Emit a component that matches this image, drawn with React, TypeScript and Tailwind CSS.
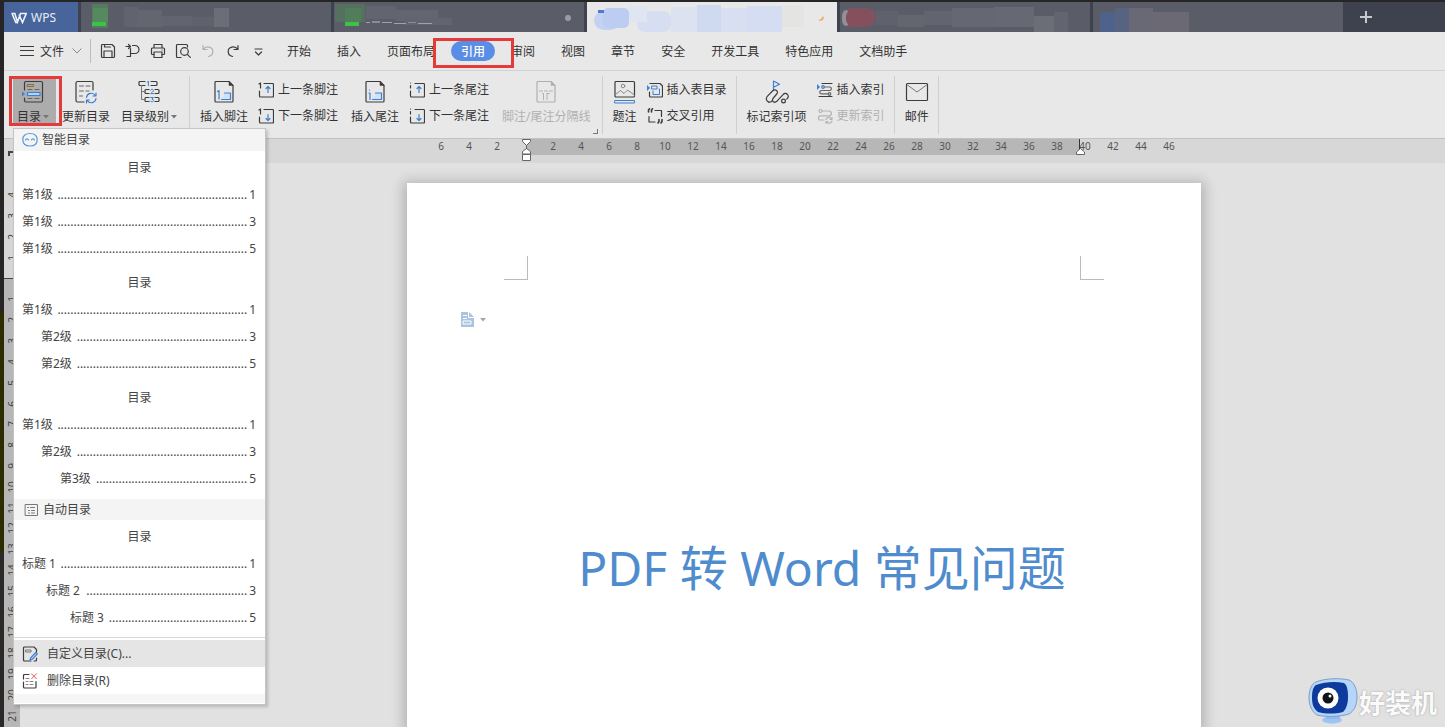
import React from 'react';

type Block = [x: number, y: number, w: number, h: number, fill: string, r?: number];

interface DocTab {
  id: string;
  active?: boolean;
  blocks: Block[];
  dot?: 'saved' | 'dirty';
}

interface TocRow {
  label: string;
  page: number;
  indent: string;
  dots: number;
}

const docTabs: DocTab[] = [
  {
    id: 'doc-1',
    blocks: [
      [11, 2, 16, 24, '#547a63'],
      [12, 6, 15, 14, '#558a5e'],
      [11, 20, 14, 4, '#3cc149'],
      [43, 5, 14, 20, '#61636e'],
      [57, 8, 24, 17, '#64666f'],
      [81, 14, 30, 10, '#626470'],
      [111, 15, 22, 9, '#5f616d'],
      [133, 6, 15, 19, '#6b6d77'],
    ],
  },
  {
    id: 'doc-2',
    dot: 'saved',
    blocks: [
      [1, 2, 30, 18, '#55705f'],
      [11, 6, 16, 14, '#527d5b'],
      [11, 20, 14, 4, '#3cc149'],
      [32, 4, 30, 13, '#62646f'],
      [62, 8, 42, 11, '#64666f'],
      [70, 16, 48, 7, '#62646f'],
      [32, 20, 4, 1, '#a0a2aa'],
      [38, 19, 8, 2, '#8b8d96'],
      [48, 20, 10, 1, '#a0a2aa'],
      [60, 21, 12, 1, '#a0a2aa'],
      [74, 20, 8, 1, '#8b8d96'],
      [84, 21, 14, 1, '#a0a2aa'],
    ],
  },
  {
    id: 'doc-3',
    active: true,
    dot: 'dirty',
    blocks: [
      [50, 9, 34, 21, '#d6def2', 8],
      [7, 9, 26, 19, '#c3d2f2', 10],
      [16, 6, 26, 20, '#bccdf1', 5],
      [11, 8, 6, 3, '#4a7dd0'],
      [42, 4, 18, 16, '#dfe5f1'],
      [84, 5, 26, 25, '#dce2f0'],
      [110, 3, 24, 27, '#cfd9ef'],
      [134, 6, 26, 24, '#d8dff0'],
      [160, 4, 35, 26, '#d4ddf2'],
      [195, 3, 22, 22, '#e4e4e3'],
    ],
  },
  {
    id: 'doc-4',
    blocks: [
      [2, 6, 34, 19, '#7d5460', 10],
      [2, 8, 8, 16, '#8f9099', 6],
      [6, 7, 26, 18, '#85505b', 8],
      [36, 9, 22, 14, '#5f616c'],
      [58, 13, 26, 12, '#64666f'],
      [84, 9, 30, 14, '#62646f'],
      [112, 6, 42, 19, '#656772'],
      [154, 5, 40, 20, '#666873'],
      [194, 14, 20, 16, '#6b6d77'],
      [214, 10, 14, 20, '#62646f'],
    ],
  },
  {
    id: 'doc-5',
    blocks: [
      [7, 10, 15, 20, '#4e628c', 3],
      [22, 6, 14, 24, '#566482'],
      [36, 6, 24, 24, '#686974'],
      [60, 10, 36, 20, '#6b6974'],
    ],
  },
];

const menuBefore = ['开始', '插入', '页面布局'];
const menuAfter = ['审阅', '视图', '章节', '安全', '开发工具', '特色应用', '文档助手'];

const smartTocs: TocRow[][] = [
  [
    { label: '第1级', page: 1, indent: 'pl-2', dots: 59 },
    { label: '第1级', page: 3, indent: 'pl-2', dots: 59 },
    { label: '第1级', page: 5, indent: 'pl-2', dots: 59 },
  ],
  [
    { label: '第1级', page: 1, indent: 'pl-2', dots: 59 },
    { label: '第2级', page: 3, indent: 'pl-[27px]', dots: 53 },
    { label: '第2级', page: 5, indent: 'pl-[27px]', dots: 53 },
  ],
  [
    { label: '第1级', page: 1, indent: 'pl-2', dots: 59 },
    { label: '第2级', page: 3, indent: 'pl-[27px]', dots: 53 },
    { label: '第3级', page: 5, indent: 'pl-[46px]', dots: 47 },
  ],
];

const autoToc: TocRow[] = [
  { label: '标题 1', page: 1, indent: 'pl-2', dots: 58 },
  { label: '标题 2', page: 3, indent: 'pl-8', dots: 50 },
  { label: '标题 3', page: 5, indent: 'pl-14', dots: 43 },
];

const rulerX = ['6', '4', '2', '', ...Array.from({ length: 23 }, (_, i) => String((i + 1) * 2))];
const rulerY = ['4', '3', '2', '1', '', ...Array.from({ length: 21 }, (_, i) => String(i + 1))];

interface IconProps {
  size?: number;
  color?: string;
  children: React.ReactNode;
}

const Icon: React.FC<IconProps> = ({ size = 16, color = '#3c3c3c', children }) => (
  <svg
    width={size}
    height={size}
    viewBox={`0 0 ${size} ${size}`}
    fill="none"
    stroke={color}
    strokeWidth="1.2"
    strokeLinecap="round"
    strokeLinejoin="round"
    className="shrink-0"
    aria-hidden="true"
  >
    {children}
  </svg>
);

const BLUE = '#3f7fd0';

const Caret: React.FC<{ color?: string }> = ({ color = '#777' }) => (
  <svg width="6" height="4" viewBox="0 0 6 4" className="shrink-0" aria-hidden="true">
    <path d="M0 0h6L3 3.4z" fill={color} />
  </svg>
);

const TocIcon = () => (
  <Icon size={24}>
    <path d="M3.500 10V3A1.500 1.500 0 0 1 5 1.500h15A1.500 1.500 0 0 1 21.500 3v17.500A1.500 1.500 0 0 1 20 22H5a1.500 1.500 0 0 1-1.500-1.500V18" />
    <rect x="6.500" y="4.500" width="6" height="2" stroke="#8a6a45" strokeWidth="1" />
    <path d="M7 9.500h4M14 9.500h4M7 18.500h4M14 18.500h4" stroke="#666" strokeWidth="1" />
    <rect x="6.500" y="12.500" width="12.500" height="3" stroke={BLUE} fill="#b9d3f3" />
    <path d="M1 11.500v5l3-2.500z" fill={BLUE} stroke="none" />
  </Icon>
);

const RefreshTocIcon = () => (
  <Icon size={24}>
    <path d="M10 22H3.500a1.500 1.500 0 0 1-1.500-1.500V3a1.500 1.500 0 0 1 1.500-1.500h14A1.500 1.500 0 0 1 19 3v7" />
    <path d="M5.500 6h4M12 6h4M5.500 11h4M12 11h3M5.500 16h3" stroke="#666" strokeWidth="1" />
    <path
      d="M12.500 17.500a4.800 4.800 0 0 1 8.800-2M22 13v3h-3M22 18.500a4.800 4.800 0 0 1-8.800 2M12.500 23v-3h3"
      stroke={BLUE}
    />
  </Icon>
);

const LevelIcon = () => (
  <Icon size={24}>
    <path d="M8 1.500H3a1 1 0 0 0-1 1v2a1 1 0 0 0 1 1h5M14 1.500h5a1 1 0 0 1 1 1v2a1 1 0 0 1-1 1h-5" />
    <path d="M12 9.500H9a1 1 0 0 0-1 1v2a1 1 0 0 0 1 1h3M18 9.500h3a1 1 0 0 1 1 1v2a1 1 0 0 1-1 1h-3" />
    <path d="M12 17.500H9a1 1 0 0 0-1 1v2a1 1 0 0 0 1 1h3M18 17.500h3a1 1 0 0 1 1 1v2a1 1 0 0 1-1 1h-3" />
    <path d="M4.500 5.500v14H8M4.500 11.500H8" stroke="#777" strokeWidth="1" />
    <path
      d="M10.200 2.200l1.200-.9v4.400M13.600 10.200c.6-1.400 2.900-1.100 2.800.4 0 1-1.500 1.900-2.800 3h3M13.600 17.500h2.800l-1.500 1.700c2.200-.1 2.200 2.600 0 2.600-.7 0-1.200-.2-1.500-.7"
      stroke={BLUE}
      strokeWidth="1"
    />
  </Icon>
);

const NoteIcon: React.FC<{ kind: 'foot' | 'end' | 'line' }> = ({ kind }) => (
  <Icon size={24} color={kind === 'line' ? '#b0b0b0' : '#3c3c3c'}>
    <path d="M4 1.500h13l4 4V21a1 1 0 0 1-1 1H4a1 1 0 0 1-1-1V2.500a1 1 0 0 1 1-1z" />
    <path d="M17 1.500V5.500h4z" fill={kind === 'line' ? '#b0b0b0' : '#3c3c3c'} strokeWidth=".5" />
    {kind === 'line' ? (
      <path d="M5.500 11h3M10.500 11h3M15.500 11h3M8.500 13.500h1v6M13 14v5.500M13 13.500h2.500" strokeWidth="1" />
    ) : (
      <>
        <path d="M12 13h7v6.500H9.500V17H12z" fill="#cfe2f8" stroke="none" />
        <path d="M12.500 13H18.500v6.500H9.500" stroke={BLUE} />
        <path d={kind === 'foot' ? 'M5.500 11.500L7 10.500V19' : 'M6.500 10h.1M6 13h1v6.500'} stroke={BLUE} />
      </>
    )}
  </Icon>
);

const StepIcon: React.FC<{ kind: 'foot' | 'end'; dir: 'up' | 'down' }> = ({ kind, dir }) => (
  <Icon>
    <path d={kind === 'foot' ? 'M1 2l1.500-1v5' : 'M1.500 1h.1M1.500 3.500V6'} />
    <path d="M6 1.500h8.500a1 1 0 0 1 1 1V14a1 1 0 0 1-1 1h-12a1 1 0 0 1-1-1V9" />
    <path
      d={dir === 'up' ? 'M10 10.500V4.500M8 6.500l2-2 2 2' : 'M10 6.500v6M8 10.500l2 2 2-2'}
      stroke={BLUE}
    />
  </Icon>
);

const CaptionIcon = () => (
  <Icon size={24}>
    <rect x="2" y="1.500" width="19.500" height="15.500" rx="1" />
    <path d="M2.500 14.500l5-4 3.500 3 3.500-3.500 7 5" stroke="#888" strokeWidth="1" />
    <circle cx="10" cy="6" r="1.800" stroke="#888" strokeWidth="1" />
    <rect x="2" y="20.500" width="19.500" height="2.500" stroke={BLUE} strokeWidth="1" />
  </Icon>
);

const TableTocIcon = () => (
  <Icon>
    <path d="M3 1.500h10l2.500 2.500v10a1 1 0 0 1-1 1H3.500a1 1 0 0 1-1-1V10" />
    <path d="M0 3v6l3-3z" fill={BLUE} stroke="none" />
    <path d="M5 4h5v3H5z" stroke={BLUE} strokeWidth="1" />
    <path d="M6 9v3.500h6.500V7H12" stroke={BLUE} strokeWidth="1" />
  </Icon>
);

const CrossRefIcon = () => (
  <Icon>
    <path d="M8 2.500h6.500v6M2 8.500v5.500h6" />
    <path d="M2.500.800L1.500 2v2M5.500.800L4.500 2v2" strokeWidth="1.600" />
    <path d="M12 11.500v2l-1 1.500M15 11.500v2l-1 1.500" strokeWidth="1.600" />
  </Icon>
);

const MarkIndexIcon = () => (
  <Icon size={24}>
    <path d="M8.500 9.500V1l6 3.200-6 3" stroke={BLUE} />
    <path d="M3.500 22c-2.500-1.200-2.800-4-1-5.800l5-5.200c3-2.800 6.500.3 4.200 3L8 18.500c-1.800 2.800 1.500 5 3.800 2.800l6-6.500c1-1.200 3-2.300 4.700-.3 1.200 1.500.8 3.200-.7 4.500" />
    <path d="M3.500 22c1.500.5 3-.2 4-1.500" />
    <circle cx="18.500" cy="21" r="1.900" />
  </Icon>
);

const InsertIndexIcon = () => (
  <Icon>
    <path d="M5 1.500h10M2 14.500h13" />
    <path d="M0 2v6l3-3z" fill={BLUE} stroke="none" />
    <path d="M7 5h6a1.800 1.800 0 0 1 0 3.500H4.500a1.700 1.700 0 0 0 0 3.400h6.500" stroke="#666" />
    <circle cx="6" cy="5" r="1.300" stroke={BLUE} />
    <circle cx="12.500" cy="12" r="1.300" stroke="#666" />
  </Icon>
);

const UpdateIndexIcon = () => (
  <Icon color="#b4b4b4">
    <path d="M5 3h7a2.300 2.300 0 0 1 0 4.800H3.500a2 2 0 0 0 0 4.200H7" />
    <circle cx="3.500" cy="3" r="1.500" />
    <path d="M9 11.500a3 3 0 0 1 5.500-.5M15 9.500v2h-2M15 13a3 3 0 0 1-5.500.8M9 15.500v-2h2" />
  </Icon>
);

const MailIcon = () => (
  <Icon size={24}>
    <rect x="1.500" y="3.500" width="21" height="17" rx="1" />
    <path d="M2.500 5l9.500 7 9.500-7" stroke="#777" strokeWidth="1" />
  </Icon>
);

interface ToolButtonProps {
  icon: React.ReactNode;
  label: string;
  caret?: boolean;
  disabled?: boolean;
}

const BigButton: React.FC<ToolButtonProps> = ({ icon, label, caret, disabled }) => (
  <button
    type="button"
    disabled={disabled}
    className="flex shrink-0 flex-col items-center gap-[5px] whitespace-nowrap disabled:text-[#b0b0b0]"
  >
    {icon}
    <span className="flex items-center gap-[2px] leading-4">
      {label}
      {caret && <Caret />}
    </span>
  </button>
);

const SmallButton: React.FC<ToolButtonProps> = ({ icon, label, disabled }) => (
  <button
    type="button"
    disabled={disabled}
    className="flex items-center gap-1 leading-4 whitespace-nowrap disabled:text-[#b0b0b0]"
  >
    {icon}
    {label}
  </button>
);

const Group: React.FC<{ launcher?: boolean; children: React.ReactNode }> = ({ launcher, children }) => (
  <div
    className={
      launcher
        ? 'relative flex shrink-0 gap-[10px] border-r border-[#cfcfcf] pt-1 pr-[11px] pl-[10px]'
        : 'flex shrink-0 gap-[10px] border-r border-[#cfcfcf] pt-1 pr-[9px] pl-[10px]'
    }
  >
    {children}
    {launcher && <span className="absolute right-1 bottom-0 size-[5px] border-r border-b border-[#777]" />}
  </div>
);

const TabStrip = () => (
  <div className="flex h-[30px] gap-[3px] overflow-hidden bg-[#3e414e]">
    <button
      type="button"
      className="flex w-[74px] shrink-0 items-center gap-1 bg-[#47659b] pt-px pl-[7px] text-xs text-[#e6ecf6]"
    >
      <svg width="16" height="12" viewBox="0 0 16 12" fill="none" stroke="#eef3fb" strokeWidth="1.6" aria-hidden="true">
        <path d="M.5 1.500h3.300L6.500 10l3-8.500h5.700L11.500 10.500 8 2.500M1 1.500l3.800 9h1.700" />
      </svg>
      WPS
    </button>
    {docTabs.map((tab) => (
      <button
        key={tab.id}
        type="button"
        aria-label={tab.id}
        className={tab.active ? 'w-[250px] shrink-0 bg-[#e8e8e8]' : 'w-[250px] shrink-0 bg-[#5a5c68]'}
      >
        <svg width="250" height="30" viewBox="0 0 250 30" aria-hidden="true">
          {tab.blocks.map(([x, y, w, h, fill, r = 0], i) => (
            <rect key={i} x={x} y={y} width={w} height={h} fill={fill} rx={r} />
          ))}
          {tab.dot === 'saved' && <circle cx="234" cy="16" r="3" fill="#9a9ba4" />}
          {tab.dot === 'dirty' && <path d="M231 18c2 0 4-1 5-4 2 3-1 6-5 4z" fill="#f0a050" />}
        </svg>
      </button>
    ))}
    <button type="button" aria-label="+" className="flex w-10 shrink-0 items-center justify-center">
      <svg width="12" height="12" viewBox="0 0 12 12" stroke="#c8c9cf" strokeWidth="2" aria-hidden="true">
        <path d="M6 0v12M0 6h12" />
      </svg>
    </button>
  </div>
);

const QuickAccess = () => (
  <div className="flex h-6 items-center gap-[9px] border-l border-[#bdbdbd] pl-[9px]">
    <Icon>
      <path d="M3 1.500h9L14.500 4v9.500a1 1 0 0 1-1 1h-11a1 1 0 0 1-1-1v-11a1 1 0 0 1 1-1z" />
      <path d="M4.500 1.500V4h6M4 14.500V8h8v6.500" />
    </Icon>
    <Icon>
      <path d="M1 3.500h4M3.500 1.500l2 2-2 2M2 13.500h3.500v-8M5.500 10.500H10a4 4 0 0 0 0-8H7.500" />
    </Icon>
    <Icon>
      <path d="M4 5V1.500h8V5M4 11.500H2.500a1 1 0 0 1-1-1V6a1 1 0 0 1 1-1h11a1 1 0 0 1 1 1v4.500a1 1 0 0 1-1 1H12" />
      <path d="M4 9h8v5.500H4zM12 7h.1" />
    </Icon>
    <Icon>
      <path d="M6 14.500H2.500a1 1 0 0 1-1-1v-11a1 1 0 0 1 1-1h9a1 1 0 0 1 1 1V4" />
      <circle cx="9.500" cy="8.500" r="3.800" />
      <path d="M12.300 11.300l3 3" />
    </Icon>
    <Icon color="#b0b0b0">
      <path d="M3 2.500v4h4M3.200 6.300C6 2.500 13 3.500 12.800 8.500c0 2.500-2 4.500-4.300 5" />
    </Icon>
    <Icon>
      <path d="M13 2.500v4H9M12.800 6.300C10 2.500 3 3.500 3.200 8.500c0 2.500 2 4.500 4.300 5" />
    </Icon>
    <Icon>
      <path d="M5 6h7M5.500 9l3 3 3-3" />
    </Icon>
  </div>
);

const MenuRow = () => (
  <div className="flex h-[39px] items-center overflow-hidden border-b border-[#d2d2d2] pl-4 whitespace-nowrap">
    <button type="button" className="flex items-center pr-2">
      <svg width="14" height="12" viewBox="0 0 14 12" stroke="#3c3c3c" aria-hidden="true">
        <path d="M0 1.500h14M0 5.500h14M0 10.500h14" />
      </svg>
      <span className="pt-[2px] pr-2 pl-[6px]">文件</span>
      <svg width="10" height="6" viewBox="0 0 10 6" fill="none" stroke="#888" aria-hidden="true">
        <path d="M.5.500L5 5 9.500.5" />
      </svg>
    </button>
    <QuickAccess />
    <nav className="flex pl-2">
      {menuBefore.map((item) => (
        <button key={item} type="button" className="mx-[3px] h-5 rounded-full px-[10px] pt-[2px]">
          {item}
        </button>
      ))}
      <button
        type="button"
        className="relative z-10 mx-[3px] h-5 rounded-full bg-[#5a8ee6] px-[10px] pt-[2px] font-medium text-white"
      >
        引用
        <span className="absolute -top-[3px] -right-[19px] -bottom-[7px] -left-[18px] border-3 border-[#e53a3a]" />
      </button>
      {menuAfter.map((item) => (
        <button key={item} type="button" className="mx-[3px] h-5 rounded-full px-[10px] pt-[2px]">
          {item}
        </button>
      ))}
    </nav>
  </div>
);

const TocBlock: React.FC<{ rows: TocRow[] }> = ({ rows }) => (
  <button type="button" className="block w-full text-left">
    <span className="block text-center leading-[27px]">目录</span>
    {rows.map((row, i) => (
      <span key={i} className={`flex gap-[2px] pr-[9px] leading-[27px] whitespace-nowrap ${row.indent}`}>
        <span>{row.label}</span>
        <span className="flex-1 text-right">{'.'.repeat(row.dots)}</span>
        <span>{row.page}</span>
      </span>
    ))}
  </button>
);

const TocMenu = () => (
  <div className="absolute top-[52px] left-0 z-20 w-[253px] border border-[#c4c4c4] bg-white pb-px text-[#444] shadow-[2px_2px_3px_rgba(0,0,0,0.18)]">
    <div className="flex h-[22px] items-center gap-1 bg-[#f4f4f4] pl-2">
      <Icon color="#5a9bd8">
        <path d="M8 1.500c4.500 0 7.200 2 7.200 6.200S12.500 14 8 14 .8 12 .8 7.700 3.500 1.500 8 1.500z" />
        <path d="M3.500 8c.5-1.500 2.500-1.500 3 0M9.500 8c.5-1.500 2.500-1.500 3 0" />
      </Icon>
      智能目录
    </div>
    <div className="flex flex-col gap-[7px] pt-[3px] pb-[7px]">
      {smartTocs.map((rows, i) => (
        <TocBlock key={i} rows={rows} />
      ))}
    </div>
    <div className="flex h-[21px] items-center gap-1 bg-[#f4f4f4] pl-[9px]">
      <Icon color="#777">
        <rect x="2.500" y="2.500" width="12" height="11" strokeWidth="1" />
        <path d="M4.500 5.500h1M7.500 5.500h4M5.500 8.500h1M8.500 8.500h3M5.500 11h1M8.500 11h3" strokeWidth="1" />
      </Icon>
      自动目录
    </div>
    <div className="border-b border-[#d6d6d6] pt-[3px] pb-[6px]">
      <TocBlock rows={autoToc} />
    </div>
    <button type="button" className="mt-[2px] flex h-[27px] w-full items-center gap-[9px] bg-[#e5e5e5] pl-2">
      <Icon>
        <path d="M9 15H2.500a1 1 0 0 1-1-1V2a1 1 0 0 1 1-1H12l2.500 2.500V6M14.500 12v2a1 1 0 0 1-1 1H12" />
        <path d="M4 4h5v2H4z" stroke="#777" strokeWidth="1" />
        <path d="M13.800 6.500l1.500 1.300-5 5.500-2.300.7.700-2.200z" stroke={BLUE} fill="#b9d3f3" />
      </Icon>
      自定义目录(C)...
    </button>
    <button type="button" className="flex h-[27px] w-full items-center gap-[9px] pl-2">
      <Icon>
        <path d="M7 1.500H2.500a1 1 0 0 0-1 1V6M1.500 9v5a1 1 0 0 0 1 1H13a1 1 0 0 0 1-1V8.500" />
        <path d="M4 5.500h3M4 8.500h2M8 8.500h3M4 11.500h2M8 11.500h3" stroke="#888" strokeWidth="1" />
        <path d="M9.500.8l5 5M14.500.8l-5 5" stroke="#e0564f" strokeWidth="1" />
      </Icon>
      删除目录(R)
    </button>
    <div className="h-[9px] bg-[#f6f6f6]" />
  </div>
);

const Ribbon = () => (
  <div className="relative flex h-17 border-b border-[#c2c2c2] pt-[5px] pb-1 pl-[9px]">
    <div className="relative shrink-0">
      <div className="relative h-[50px] w-[43px] bg-[#acacac] pt-1 pl-1">
        <BigButton icon={<TocIcon />} label="目录" caret />
        <span className="absolute top-0 -right-[6px] bottom-0 -left-1 z-30 border-3 border-[#e53a3a]" />
      </div>
      <TocMenu />
    </div>
    <div className="flex shrink-0 gap-[11px] border-r border-[#cfcfcf] pt-1 pr-3 pl-[6px]">
      <BigButton icon={<RefreshTocIcon />} label="更新目录" />
      <BigButton icon={<LevelIcon />} label="目录级别" caret />
    </div>
    <Group launcher>
      <BigButton icon={<NoteIcon kind="foot" />} label="插入脚注" />
      <div className="flex flex-col gap-[10px] pt-[2px] pr-[3px]">
        <SmallButton icon={<StepIcon kind="foot" dir="up" />} label="上一条脚注" />
        <SmallButton icon={<StepIcon kind="foot" dir="down" />} label="下一条脚注" />
      </div>
      <BigButton icon={<NoteIcon kind="end" />} label="插入尾注" />
      <div className="flex flex-col gap-[10px] pt-[2px] pr-[3px]">
        <SmallButton icon={<StepIcon kind="end" dir="up" />} label="上一条尾注" />
        <SmallButton icon={<StepIcon kind="end" dir="down" />} label="下一条尾注" />
      </div>
      <BigButton icon={<NoteIcon kind="line" />} label="脚注/尾注分隔线" disabled />
    </Group>
    <Group>
      <BigButton icon={<CaptionIcon />} label="题注" />
      <div className="flex flex-col gap-[10px] pt-[2px]">
        <SmallButton icon={<TableTocIcon />} label="插入表目录" />
        <SmallButton icon={<CrossRefIcon />} label="交叉引用" />
      </div>
    </Group>
    <Group>
      <BigButton icon={<MarkIndexIcon />} label="标记索引项" />
      <div className="flex flex-col gap-[10px] pt-[2px]">
        <SmallButton icon={<InsertIndexIcon />} label="插入索引" />
        <SmallButton icon={<UpdateIndexIcon />} label="更新索引" disabled />
      </div>
    </Group>
    <Group>
      <BigButton icon={<MailIcon />} label="邮件" />
    </Group>
  </div>
);

const HorizontalRuler = () => (
  <div className="grid h-6 overflow-hidden bg-[#d7d7d7] text-[10px] text-[#555]">
    <div className="ml-[523px] h-4 w-[553px] bg-[#b7b7b7] [grid-area:1/1]" />
    <svg width="16" height="24" viewBox="0 0 16 24" fill="none" stroke="#444" strokeWidth="2" className="[grid-area:1/1]" aria-hidden="true">
      <path d="M5 12v5M5 13h5" />
    </svg>
    <div className="ml-[423px] flex [grid-area:1/1]">
      {rulerX.map((n, i) => (
        <span key={i} className="w-7 shrink-0 text-center leading-[14px]">
          {n}
        </span>
      ))}
    </div>
    <svg
      width="570"
      height="24"
      viewBox="0 0 570 24"
      fill="#fff"
      stroke="#666"
      className="ml-[518px] [grid-area:1/1]"
      aria-hidden="true"
    >
      <path d="M.5.500h8v2l-4 4-4-4zM4.500 9.500l4 3v2.500h-8v-2.500zM.5 15.500h8v6h-8z" />
      <path d="M4.500 6v4" />
      <path d="M557.500 0v10" stroke="#333" />
      <path d="M558.500 9.500l4 3.500v2.500h-8V13z" />
    </svg>
  </div>
);

const VerticalRuler = () => (
  <div className="w-4 shrink-0 bg-[linear-gradient(#d6d6d6_115px,#444_115px,#444_116px,#b7b7b7_116px)] pt-[22px] text-[10px] text-[#444]">
    <div className="flex h-[541px] flex-col">
      {rulerY.map((n, i) => (
        <span key={i} className="flex flex-1 items-center justify-center">
          <span className="-rotate-90 leading-3">{n}</span>
        </span>
      ))}
    </div>
  </div>
);

const DocumentPage = () => (
  <article className="mt-5 ml-[387px] w-[794px] shrink-0 bg-white shadow-[0_2px_12px_4px_rgba(0,0,0,0.2)]">
    <div className="flex justify-between px-[97px] pt-[73px]">
      <span className="size-6 border-r border-b border-[#bbb]" />
      <span className="size-6 border-b border-l border-[#bbb]" />
    </div>
    <button type="button" aria-label="粘贴选项" className="mt-8 ml-[53px] flex items-center gap-[6px]">
      <svg width="14" height="15" viewBox="0 0 14 15" aria-hidden="true">
        <path d="M1 0h8l5 5v10H1z" fill="#aac4e0" />
        <path d="M8.500 0v5.500H14M3 3.500h4M3 6.500h4M3 9h8v3H3z" fill="none" stroke="#fff" />
      </svg>
      <Caret color="#a5a5a5" />
    </button>
    <h1 className="mt-[205px] pl-9 text-center text-5xl leading-[72px] whitespace-nowrap text-[#4f8ccd]">
      PDF 转 Word 常见问题
    </h1>
  </article>
);

const Watermark = () => (
  <div className="absolute right-2 bottom-[3px] z-30 flex items-center gap-px">
    <svg width="50" height="46" viewBox="0 0 50 46" aria-hidden="true">
      <ellipse cx="24" cy="42" rx="10" ry="3.500" fill="#9cc4f5" />
      <path d="M18 34h16l-3 7H18z" fill="#8fbaf0" />
      <path
        d="M8 4C18 0 32 0 41 2c5 2 8 9 8 17s-3 14-8 17c-10 3-24 3-32 1C4 34 1 27 1 20S3 6 8 4z"
        fill="#b5d6fb"
        stroke="#7f9cc4"
      />
      <path d="M8 7c8-3 19-4 28-2 3 2 4 7 4 14s-2 12-5 15c-8 2-17 2-25 0-4-3-6-7-6-14S5 9 8 7z" fill="#0d3a9c" />
      <circle cx="20" cy="20" r="10.500" fill="#fff" />
      <circle cx="20" cy="20" r="5.500" fill="#101418" />
      <circle cx="22" cy="18" r="1.500" fill="#fff" />
    </svg>
    <span className="pt-1 text-[26px] leading-9 font-bold text-[#fafafa] [text-shadow:0_0_2px_#999]">好装机</span>
  </div>
);

const App: React.FC = () => (
  <div className="relative flex min-h-screen overflow-hidden bg-[#262626] pt-[2px] font-['Noto_Sans','Noto_Sans_CJK_SC',sans-serif] text-xs text-[#333]">
    <div className="w-1 shrink-0 bg-[linear-gradient(#262424_310px,#2c2c00_310px,#2c2c00_550px,#2b2828_550px)]" />
    <div className="flex min-w-0 flex-1 flex-col bg-[#e8e8e8]">
      <TabStrip />
      <MenuRow />
      <Ribbon />
      <HorizontalRuler />
      <main className="flex flex-1 bg-[#e1e1e1]">
        <VerticalRuler />
        <DocumentPage />
      </main>
    </div>
    <Watermark />
  </div>
);

export default App;
